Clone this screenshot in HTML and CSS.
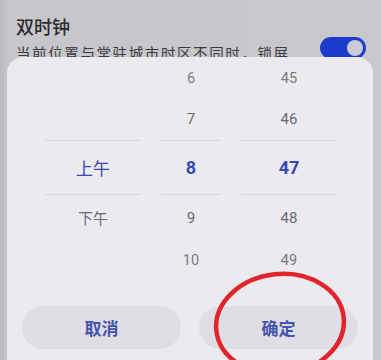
FILE: index.html
```html
<!DOCTYPE html>
<html lang="zh">
<head>
<meta charset="utf-8">
<link rel="stylesheet" href="styles.css">
</head>
<body>
<div class="screen">
  <div class="header">
    <div class="texts">
      <div class="title">双时钟</div>
      <div class="subtitle">当前位置与常驻城市时区不同时，锁屏</div>
    </div>
    <div class="toggle"><span class="knob"></span></div>
  </div>
  <div class="dialog">
    <div class="picker">
      <div class="cell r1"></div><div class="cell r1">6</div><div class="cell r1">45</div>
      <div class="cell r2"></div><div class="cell r2">7</div><div class="cell r2">46</div>
      <div class="cell r3 sel">上午</div><div class="cell r3 sel num">8</div><div class="cell r3 sel num">47</div>
      <div class="cell r4">下午</div><div class="cell r4">9</div><div class="cell r4">48</div>
      <div class="cell r5"></div><div class="cell r5">10</div><div class="cell r5">49</div>
    </div>
    <div class="buttons">
      <div class="btn">取消</div>
      <div class="btn">确定</div>
    </div>
  </div>
  <svg class="circle" width="150" height="120" viewBox="0 0 150 120">
    <ellipse cx="74" cy="56" rx="64" ry="50" transform="rotate(-6 74 56)" fill="none" stroke="#e3242b" stroke-width="4.5"/>
  </svg>
</div>
</body>
</html>
```
FILE: styles.css
```css
html, body {
  margin: 0;
  padding: 0;
}
body {
  width: 381px;
  height: 360px;
  overflow: hidden;
  background: #c6c5c9;
  font-family: "Noto Sans CJK SC", "Noto Sans", sans-serif;
}
.screen {
  position: relative;
  width: 381px;
  height: 360px;
  overflow: hidden;
  background: linear-gradient(90deg, #b9b8bc 0, #c7c6ca 8px, #c9c8cc 100%);
}
.header {
  height: 57px;
  overflow: hidden;
  display: flex;
  justify-content: space-between;
  align-items: flex-start;
  padding: 0 15px 0 16px;
  box-sizing: border-box;
}
.texts {
  padding-top: 13px;
}
.title {
  font-size: 18px;
  line-height: 26px;
  color: #2a2a2e;
  font-weight: 500;
}
.subtitle {
  font-size: 14.5px;
  line-height: 20px;
  color: #3a3a40;
  letter-spacing: 1.6px;
  margin-top: 4px;
  white-space: nowrap;
}
.toggle {
  margin-top: 37px;
  width: 46px;
  height: 22px;
  border-radius: 11px;
  background: #1c3ccc;
  position: relative;
}
.knob {
  position: absolute;
  right: 3px;
  top: 3px;
  width: 16px;
  height: 16px;
  border-radius: 50%;
  background: #c9cbd6;
}
.dialog {
  margin: 0 8px 0 7px;
  height: 320px;
  background: #ebeaef;
  border-radius: 16px 16px 0 0;
  padding-top: 2px;
  box-sizing: border-box;
}
.picker {
  display: grid;
  grid-template-columns: 96px 60px 96px;
  grid-template-rows: 38px 43px 55px 45px 40px;
  column-gap: 20px;
  padding-left: 38px;
}
.cell {
  display: flex;
  align-items: center;
  justify-content: center;
  font-family: Roboto, "Noto Sans CJK SC", sans-serif;
  font-size: 15px;
  color: #6a6a70;
}
.r1, .r5 { color: #7a7a80; font-size: 14.5px; }
.r3 {
  border-top: 1px solid #d8d7dd;
  border-bottom: 1px solid #d8d7dd;
}
.sel {
  color: #3747b4;
  font-size: 17px;
}
.sel.num {
  font-weight: 700;
  font-size: 18px;
}
.buttons {
  display: flex;
  gap: 18px;
  padding: 26px 15px 0;
}
.btn {
  flex: 1;
  height: 43px;
  border-radius: 22px;
  background: #dfdee4;
  display: flex;
  align-items: center;
  justify-content: center;
  font-size: 17px;
  font-weight: 700;
  color: #4354ad;
}
.circle {
  position: absolute;
  left: 206px;
  top: 268px;
}
```
